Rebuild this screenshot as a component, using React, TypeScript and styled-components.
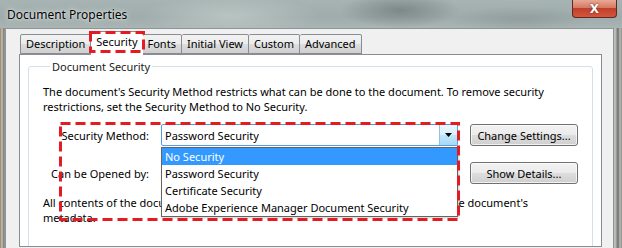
import styled, { createGlobalStyle } from 'styled-components';

const GlobalStyle = createGlobalStyle`
  html, body {
    margin: 0;
    padding: 0;
  }
  body {
    font-family: "Noto Sans", "Liberation Sans", sans-serif;
    font-size: 11px;
    color: #000;
  }
`;

const Window = styled.div`
  width: 622px;
  height: 248px;
  overflow: hidden;
  display: flex;
  flex-direction: column;
  background:
    linear-gradient(90deg, #8c8272 0px, #c9c1b2 2px, #7a7166 4px, transparent 5px),
    linear-gradient(90deg, transparent 614px, #c4c8c6 615px, #6d6f6c 618px, #b9bcb8 620px, #8a8c88 622px),
    #a9b3b2;
`;

const TitleBar = styled.div`
  height: 28px;
  flex: none;
  display: flex;
  justify-content: space-between;
  align-items: flex-start;
  padding-left: 7px;
  background:
    radial-gradient(ellipse 60px 18px at 400px 10px, rgba(80, 90, 90, 0.45), transparent),
    radial-gradient(ellipse 90px 20px at 230px 16px, rgba(210, 220, 215, 0.5), transparent),
    radial-gradient(ellipse 70px 14px at 520px 20px, rgba(120, 130, 132, 0.35), transparent),
    linear-gradient(180deg, #a7b4b3 0%, #9eacab 60%, #aab5b4 100%);
`;

const Title = styled.span`
  margin-top: 6px;
  font-size: 12px;
  color: #000;
  text-shadow: 0 0 6px rgba(255, 255, 255, 0.9), 0 0 2px rgba(255, 255, 255, 0.8);
`;

const CloseButton = styled.div`
  width: 45px;
  height: 18px;
  margin-right: 5px;
  box-sizing: border-box;
  border: 1px solid #5e2a22;
  border-top: none;
  border-radius: 0 0 4px 4px;
  background: linear-gradient(180deg, #e8a896 0%, #d77a63 45%, #c0402a 50%, #d4563d 100%);
  display: flex;
  align-items: center;
  justify-content: center;
  color: #fff;
  font-family: "DejaVu Sans", sans-serif;
  font-weight: bold;
  font-size: 12px;
  text-shadow: 0 0 2px #5e1a10;
`;

const Client = styled.div`
  flex: 1;
  margin: 0 8px 0 5px;
  background: #f0f0f0;
  border: 1px solid #8b9698;
  border-bottom: none;
  padding: 2px 11px 0 13px;
  display: flex;
  flex-direction: column;
  min-height: 0;
`;

const TabStrip = styled.div`
  height: 23px;
  flex: none;
  display: flex;
  align-items: flex-end;
  padding-left: 1px;
  position: relative;
  z-index: 1;
`;

const Tab = styled.div<{ $active?: boolean }>`
  position: relative;
  box-sizing: border-box;
  height: ${(p) => (p.$active ? '24px' : '20px')};
  margin-bottom: ${(p) => (p.$active ? '-1px' : '0')};
  margin-left: ${(p) => (p.$active ? '-1px' : '0')};
  margin-right: ${(p) => (p.$active ? '-1px' : '0')};
  padding: ${(p) => (p.$active ? '2px 5px 0' : '1px 5px 0')};
  border: 1px solid #898c95;
  border-left-width: ${(p) => (p.$active ? '1px' : '0')};
  border-bottom: ${(p) => (p.$active ? 'none' : '1px solid #898c95')};
  border-radius: 2px 2px 0 0;
  background: ${(p) =>
    p.$active
      ? '#ffffff'
      : 'linear-gradient(180deg, #f2f2f2 0%, #ebebeb 50%, #dddddd 51%, #cfcfcf 100%)'};
  line-height: 16px;
  white-space: nowrap;

  &:first-child {
    border-left-width: 1px;
  }
`;

const Annotation = styled.svg`
  position: absolute;
  overflow: visible;
  pointer-events: none;
  z-index: 5;
`;

const Panel = styled.div`
  flex: 1;
  min-height: 0;
  margin-bottom: 1px;
  background: #ffffff;
  border: 1px solid #898c95;
  padding: 4px 8px 0;
  overflow: hidden;
`;

const Group = styled.fieldset`
  margin: 0;
  padding: 0 14px;
  border: 1px solid #d5dfe5;
  border-radius: 3px;
  height: 200px;
  box-sizing: border-box;

  legend {
    margin-left: 7px;
    padding: 0 2px;
    line-height: 15px;
    color: #1a1a1a;
  }
`;

const Text = styled.p<{ $top: number }>`
  margin: ${(p) => p.$top}px 0 0;
  line-height: 15px;
`;

const Rows = styled.div`
  position: relative;
  margin-top: 10px;
  display: grid;
  grid-template-columns: 106px 297px 108px;
  column-gap: 12px;
  row-gap: 16px;
  align-items: center;
`;

const Label = styled.div`
  text-align: right;
  white-space: nowrap;
`;

const SelectWrap = styled.div`
  position: relative;
  height: 22px;
`;

const SelectBox = styled.div`
  height: 22px;
  box-sizing: border-box;
  border: 1px solid #569de5;
  border-radius: 2px;
  background: #fff;
  display: flex;
  align-items: center;
  padding-left: 3px;
  position: relative;
`;

const SelectValue = styled.span`
  flex: 1;
`;

const ArrowButton = styled.div`
  width: 18px;
  height: 20px;
  box-sizing: border-box;
  border-left: 1px solid #8cc2e8;
  background: linear-gradient(180deg, #eaf6fd 0%, #d9f0fc 50%, #bee6fd 51%, #a7d9f5 100%);
  display: flex;
  align-items: center;
  justify-content: center;
`;

const List = styled.div`
  position: absolute;
  left: 0;
  top: 23px;
  width: 297px;
  box-sizing: border-box;
  border: 1px solid #646464;
  background: #fff;
  z-index: 3;
  box-shadow: 1px 1px 2px rgba(0, 0, 0, 0.2);
`;

const Option = styled.div<{ $selected?: boolean }>`
  height: 17px;
  line-height: 17px;
  padding-left: 3px;
  white-space: nowrap;
  background: ${(p) => (p.$selected ? '#3399ff' : 'transparent')};
  color: ${(p) => (p.$selected ? '#fff' : '#000')};
`;

const Button = styled.div`
  height: 22px;
  box-sizing: border-box;
  border: 1px solid #707070;
  border-radius: 3px;
  background: linear-gradient(180deg, #f2f2f2 0%, #ebebeb 50%, #dddddd 51%, #cfcfcf 100%);
  box-shadow: inset 0 0 0 1px rgba(255, 255, 255, 0.7);
  display: flex;
  align-items: center;
  justify-content: center;
`;

const Dashed = ({ w, h, style }: { w: number; h: number; style: React.CSSProperties }) => (
  <Annotation width={w} height={h} style={style}>
    <rect
      x={1.5}
      y={1.5}
      width={w - 3}
      height={h - 3}
      fill="none"
      stroke="#e31c23"
      strokeWidth={3}
      strokeDasharray="10 5"
    />
  </Annotation>
);

const tabs = ['Description', 'Security', 'Fonts', 'Initial View', 'Custom', 'Advanced'];
const options = [
  'No Security',
  'Password Security',
  'Certificate Security',
  'Adobe Experience Manager Document Security',
];

export default function App() {
  return (
    <>
      <GlobalStyle />
      <Window>
        <TitleBar>
          <Title>Document Properties</Title>
          <CloseButton>X</CloseButton>
        </TitleBar>
        <Client>
          <TabStrip>
            {tabs.map((t) => (
              <Tab key={t} $active={t === 'Security'}>
                {t}
                {t === 'Security' && <Dashed w={56} h={22} style={{ left: -2, top: -1 }} />}
              </Tab>
            ))}
          </TabStrip>
          <Panel>
            <Group>
              <legend>Document Security</legend>
              <Text $top={10}>
                The document's Security Method restricts what can be done to the document. To remove
                security
                <br />
                restrictions, set the Security Method to No Security.
              </Text>
              <Rows>
                <Dashed w={401} h={99} style={{ left: 16, top: -2 }} />
                <Label>Security Method:</Label>
                <SelectWrap>
                  <SelectBox>
                    <SelectValue>Password Security</SelectValue>
                    <ArrowButton>
                      <svg width="7" height="4" viewBox="0 0 7 4">
                        <path d="M0 0 H7 L3.5 4 Z" fill="#000" />
                      </svg>
                    </ArrowButton>
                  </SelectBox>
                  <List>
                    {options.map((o, i) => (
                      <Option key={o} $selected={i === 0}>
                        {o}
                      </Option>
                    ))}
                  </List>
                </SelectWrap>
                <Button>Change Settings...</Button>
                <Label>Can be Opened by:</Label>
                <div />
                <Button>Show Details...</Button>
              </Rows>
              <Text $top={11}>
                All contents of the document are encrypted and search engines cannot access the
                document's
                <br />
                metadata.
              </Text>
            </Group>
          </Panel>
        </Client>
      </Window>
    </>
  );
}
